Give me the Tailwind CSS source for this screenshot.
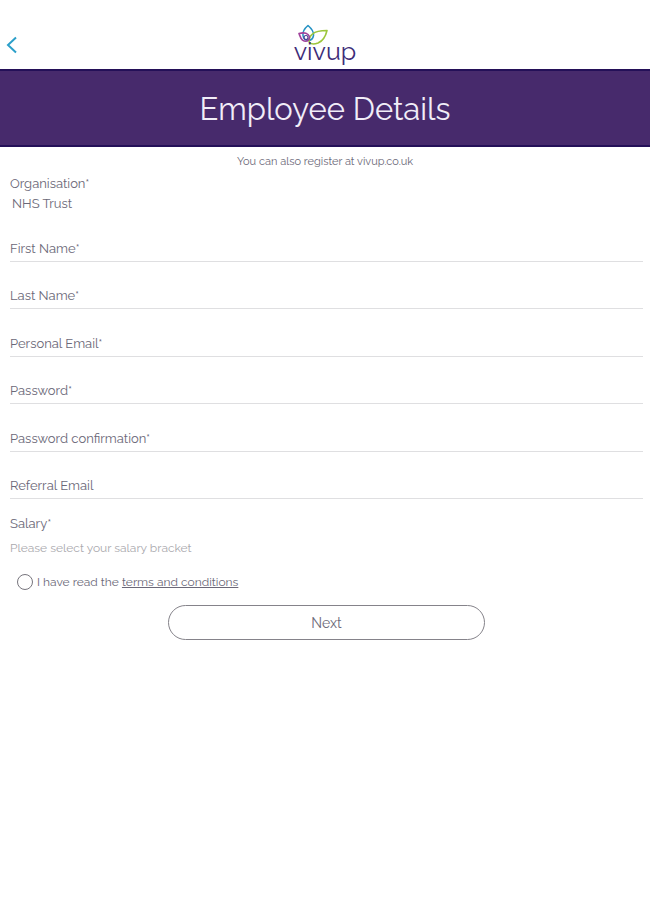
<!DOCTYPE html>
<html lang="en">

<head>
    <meta charset="UTF-8">
    <meta name="viewport" content="width=device-width, initial-scale=1.0">
    <script src="https://cdn.jsdelivr.net/npm/@tailwindcss/browser@4"></script>
    <title>Employee Details</title>
</head>

<body class="bg-white font-['Raleway','Lato',sans-serif] text-[13px] leading-5 text-[#6b6878]">
    <header>
        <div class="grid grid-cols-[1fr_auto_1fr] h-[69px]">
            <a href="#" aria-label="Back" class="pl-[6px] pt-[36px]">
                <svg class="w-3 h-[18px]" viewBox="0 0 12 18" fill="none" stroke="#2b9fc9" stroke-width="2">
                    <path d="M10 1.5 2 9l8 7.5" />
                </svg>
            </a>

            <!-- Logo -->
            <div class="pt-6">
                <svg class="block w-9 h-[22px] ml-1 -mb-[9px]" viewBox="0 0 36 22" fill="none" stroke-width="1.6" stroke-linejoin="round">
                    <path d="M10 1.5C7 4 4.500 7.500 5 11.500c.5 3.500 2.500 5 5 5 3 0 5-2 5.500-5C16 8 13.500 4.500 10 1.500z" stroke="#2793c4" />
                    <path d="M29 6.500c-6 0-11 .5-14.500 3.500-3 2.500-4 6-3 8.500 1.500 1.500 5 1.800 8.500.5 5-2 7.500-6 9-12.500z" stroke="#9cc63b" />
                    <path d="M1 9.500c3-.8 7-.8 9 1 1.800 1.600 1.800 4 .5 5.500-1.500 1.500-4 1.500-6 .2C2.500 14.500 2 12 1 9.500z" stroke="#a0429b" />
                    <circle cx="8" cy="13.500" r="2" stroke="#4b3c94" stroke-width="1.2" />
                </svg>
                <span class="block text-[25px] leading-7 text-[#3d2c78]">vivup</span>
            </div>
        </div>
        <h1 class="flex items-center justify-center h-[78px] pt-px bg-[#472a6c] border-y-2 border-[#241058] text-[31px] text-[#f1edf8]">Employee Details</h1>
        <p class="pt-[7px] text-center text-[11px] leading-4">You can also register at vivup.co.uk</p>
    </header>

    <form class="pl-[10px] pr-[7px] pt-1">
        <label for="organisation" class="block">Organisation*</label>
        <input id="organisation" type="text" value="NHS Trust" readonly class="block w-full pl-[2px] outline-none">

        <!-- Text fields -->
        <div class="grid auto-rows-fr min-h-[285px]">
            <div class="flex items-end gap-2 pb-[2px] border-b border-[#dfdfe1]">
                <label for="first-name">First Name*</label>
                <input id="first-name" type="text" class="flex-1 min-w-0 outline-none">
            </div>
            <div class="flex items-end gap-2 pb-[2px] border-b border-[#dfdfe1]">
                <label for="last-name">Last Name*</label>
                <input id="last-name" type="text" class="flex-1 min-w-0 outline-none">
            </div>
            <div class="flex items-end gap-2 pb-[2px] border-b border-[#dfdfe1]">
                <label for="email">Personal Email*</label>
                <input id="email" type="email" class="flex-1 min-w-0 outline-none">
            </div>
            <div class="flex items-end gap-2 pb-[2px] border-b border-[#dfdfe1]">
                <label for="password">Password*</label>
                <input id="password" type="password" class="flex-1 min-w-0 outline-none">
            </div>
            <div class="flex items-end gap-2 pb-[2px] border-b border-[#dfdfe1]">
                <label for="confirmation">Password confirmation*</label>
                <input id="confirmation" type="password" class="flex-1 min-w-0 outline-none">
            </div>
            <div class="flex items-end gap-2 pb-[2px] border-b border-[#dfdfe1]">
                <label for="referral">Referral Email</label>
                <input id="referral" type="email" class="flex-1 min-w-0 outline-none">
            </div>
        </div>

        <!-- Salary -->
        <label for="salary" class="block pt-[15px]">Salary*</label>
        <select id="salary" class="block w-full mt-1 appearance-none text-xs leading-5 text-[#aaa9ae] outline-none">
            <option>Please select your salary bracket</option>
        </select>

        <div class="flex items-center gap-1 pl-[7px] pt-[14px] text-xs leading-5">
            <input id="terms" type="checkbox" class="appearance-none size-4 rounded-full border border-[#77757d] checked:bg-[#472a6c]">
            <label for="terms">I have read the <a href="#" class="underline">terms and conditions</a></label>
        </div>

        <button type="submit" class="block w-1/2 h-[35px] mx-auto mt-[13px] rounded-full border border-[#85838a] text-sm">Next</button>
    </form>
</body>

</html>
